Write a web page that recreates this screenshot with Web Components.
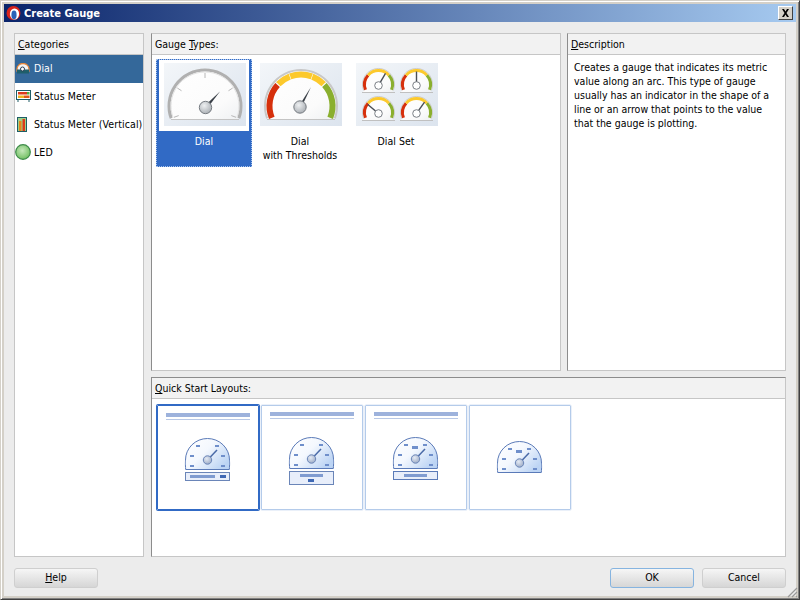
<!DOCTYPE html>
<html>
<head>
<meta charset="utf-8">
<title>Create Gauge</title>
<style>
  html, body { margin: 0; padding: 0; height: 100%; overflow: hidden; background: #ececec; }
</style>
</head>
<body>
<gauge-dialog heading="Create Gauge">
  <dialog-panel slot="categories" mnemonic="C" label="ategories">
    <category-item icon="dial" selected>Dial</category-item>
    <category-item icon="meter">Status Meter</category-item>
    <category-item icon="vmeter">Status Meter (Vertical)</category-item>
    <category-item icon="led">LED</category-item>
  </dialog-panel>

  <dialog-panel slot="types" divider before="Gauge " mnemonic="T" label="ypes:">
    <type-grid>
      <type-tile kind="dial" selected>Dial</type-tile>
      <type-tile kind="thresholds">Dial<br>with Thresholds</type-tile>
      <type-tile kind="set">Dial Set</type-tile>
    </type-grid>
  </dialog-panel>

  <dialog-panel slot="description" divider mnemonic="D" label="escription">
    <description-text>Creates a gauge that indicates its metric value along an arc. This type of gauge usually has an indicator in the shape of a line or an arrow that points to the value that the gauge is plotting.</description-text>
  </dialog-panel>

  <dialog-panel slot="layouts" divider topline mnemonic="Q" label="uick Start Layouts:">
    <layout-grid>
      <layout-tile variant="1" selected></layout-tile>
      <layout-tile variant="2"></layout-tile>
      <layout-tile variant="3"></layout-tile>
      <layout-tile variant="4"></layout-tile>
    </layout-grid>
  </dialog-panel>

  <dialog-button slot="help" mnemonic="H" label="elp"></dialog-button>
  <dialog-button slot="ok" label="OK" focused></dialog-button>
  <dialog-button slot="cancel" label="Cancel"></dialog-button>
</gauge-dialog>

<script>
const UI_FONT = '"DejaVu Sans", sans-serif';

class GaugeDialog extends HTMLElement {
  connectedCallback() {
    this.attachShadow({ mode: 'open' });
    this.shadowRoot.innerHTML = `
      <style>
        :host {
          display: flex;
          flex-direction: column;
          position: relative;
          box-sizing: border-box;
          width: 800px;
          height: 600px;
          padding: 4px;
          background: #ececec;
          border: 1px solid #d4d0c8;
          border-right-color: #404040;
          border-bottom-color: #404040;
          box-shadow: inset 1px 1px 0 #fff, inset -1px -1px 0 #808080, inset 3px 3px 0 #d4d0c8, inset -3px -3px 0 #d4d0c8;
          font: 10.5px ${UI_FONT};
          font-stretch: condensed;
          color: #000;
        }
        .title {
          flex: none;
          display: flex;
          align-items: center;
          height: 18px;
          margin: -1px -1px 0 -1px;
          padding: 0 3px 0 2px;
          background: linear-gradient(90deg, #0a246a 0%, #a6caf0 100%);
          color: #fff;
          font: bold 11px ${UI_FONT};
          font-stretch: condensed;
        }
        .title svg { margin-right: 3px; }
        .title span { flex: 1; }
        .close {
          width: 15px;
          height: 14px;
          box-sizing: border-box;
          background: #d4d0c8;
          border: 1px solid;
          border-color: #fff #404040 #404040 #fff;
          display: flex;
          align-items: center;
          justify-content: center;
        }
        .close svg { margin: 0; }
        .body {
          flex: 1;
          min-height: 0;
          display: grid;
          grid-template-columns: 130px 1fr;
          grid-template-rows: 1fr;
          gap: 7px;
          padding: 11px 9px 0 9px;
        }
        .right {
          display: grid;
          grid-template-columns: 410px 219px;
          grid-template-rows: 338px 180px;
          column-gap: 6px;
          row-gap: 6px;
        }
        .wide { grid-column: 1 / 3; display: grid; }
        .cell { display: grid; min-width: 0; min-height: 0; }
        .buttons {
          flex: none;
          display: flex;
          align-items: center;
          height: 38px;
          padding: 4px 9px 0 9px;
          box-sizing: border-box;
        }
        .spring { flex: 1; }
        .gap { width: 8px; }
        .grip { position: absolute; right: 1px; bottom: 1px; }
      </style>
      <div class="title">
        <svg width="15" height="16" viewBox="0 0 15 16">
          <circle cx="7.500" cy="8" r="7" fill="#d8241c"/>
          <ellipse cx="8.500" cy="9" rx="4.600" ry="5.600" fill="#fff"/>
          <ellipse cx="8" cy="10" rx="2.600" ry="4.400" fill="#2a62b8"/>
        </svg>
        <span>${this.getAttribute('heading')}</span>
        <div class="close">
          <svg width="9" height="8" viewBox="0 0 9 8"><path d="M1 0l2 0 1.500 2.400L6 0l2 0-2.500 4L8 8 6 8 4.500 5.600 3 8 1 8l2.500-4z" fill="#000"/></svg>
        </div>
      </div>
      <div class="body">
        <div class="cell"><slot name="categories"></slot></div>
        <div class="right">
          <div class="cell"><slot name="types"></slot></div>
          <div class="cell"><slot name="description"></slot></div>
          <div class="wide"><slot name="layouts"></slot></div>
        </div>
      </div>
      <div class="buttons">
        <slot name="help"></slot>
        <div class="spring"></div>
        <slot name="ok"></slot>
        <div class="gap"></div>
        <slot name="cancel"></slot>
      </div>
      <svg class="grip" width="12" height="12" viewBox="0 0 12 12">
        <path d="M11 2L2 11M11 6L6 11M11 10L10 11" stroke="#9a9a9a" stroke-width="1.200" fill="none"/>
      </svg>
    `;
  }
}

class DialogPanel extends HTMLElement {
  connectedCallback() {
    this.attachShadow({ mode: 'open' });
    const before = this.getAttribute('before') || '';
    this.shadowRoot.innerHTML = `
      <style>
        :host {
          display: flex;
          flex-direction: column;
          box-sizing: border-box;
          min-width: 0;
          min-height: 0;
          background: #fff;
          border: 1px solid #c6c6c6;
        }
        :host([divider]) { border-left-color: #8c8c8c; }
        :host([topline]) { border-top-color: #8c8c8c; }
        .head {
          flex: none;
          height: 20px;
          line-height: 20px;
          padding-left: 3px;
          background: #f2f2f2;
          border-bottom: 1px solid #c6c6c6;
          white-space: nowrap;
        }
        .content { flex: 1; min-height: 0; }
      </style>
      <div class="head">${before}<u>${this.getAttribute('mnemonic')}</u>${this.getAttribute('label')}</div>
      <div class="content"><slot></slot></div>
    `;
  }
}

const CATEGORY_ICONS = {
  dial: `<svg width="14" height="11" viewBox="0 0 14 11" style="margin-left:1px">
      <path d="M1 8V6a6 5.500 0 0 1 12 0v2z" fill="#f4f4f4" stroke="#e8873a" stroke-width="1.300"/>
      <rect x="1" y="6.500" width="12" height="4" fill="#1f5f6b"/>
      <circle cx="6.500" cy="6" r="2" fill="#fff" stroke="#2a3f55"/>
    </svg>`,
  meter: `<svg width="15" height="12" viewBox="0 0 15 12" style="margin-left:1px">
      <rect x=".5" y=".5" width="14" height="9" fill="#fff" stroke="#1e5d66"/>
      <rect x="2" y="2" width="9" height="2.500" fill="#dd3a1a"/>
      <rect x="11" y="2" width="2.500" height="2.500" fill="#4fae3e"/>
      <rect x="2" y="5.500" width="6" height="2.500" fill="#f0b420"/>
      <rect x="8" y="5.500" width="5.500" height="2.500" fill="#dd5a1a"/>
      <path d="M2 10v2M13 10v2" stroke="#1e5d66"/>
    </svg>`,
  vmeter: `<svg width="10" height="15" viewBox="0 0 10 15" style="margin-left:2px">
      <rect x=".5" y=".5" width="9" height="14" fill="#9fd08a" stroke="#1e5d66"/>
      <rect x="2" y="4" width="2.500" height="10" fill="#e8861a"/>
      <rect x="5.500" y="2" width="2.500" height="12" fill="#dd3a1a"/>
    </svg>`,
  led: `<svg width="16" height="16" viewBox="0 0 16 16">
      <defs><radialGradient id="led" cx="45%" cy="40%" r="60%">
        <stop offset="0" stop-color="#c6e8bc"/><stop offset="1" stop-color="#72c062"/>
      </radialGradient></defs>
      <circle cx="8" cy="8" r="7.300" fill="url(#led)" stroke="#3d8a4a" stroke-width="1.200"/>
    </svg>`
};

class CategoryItem extends HTMLElement {
  connectedCallback() {
    this.attachShadow({ mode: 'open' });
    const icon = this.getAttribute('icon');
    this.shadowRoot.innerHTML = `
      <style>
        :host {
          display: flex;
          align-items: center;
          box-sizing: border-box;
          height: 28px;
          padding-bottom: 2px;
          white-space: nowrap;
          letter-spacing: 0.1px;
        }
        :host([selected]) { background: #34689a; color: #fff; }
        .icon {
          flex: none;
          width: 19px;
          display: flex;
        }
      </style>
      <div class="icon">${CATEGORY_ICONS[icon]}</div>
      <slot></slot>
    `;
  }
}

// helpers for the big dial pictures
function polar(cx, cy, r, deg) {
  const a = deg * Math.PI / 180;
  return [(cx + r * Math.sin(a)).toFixed(2), (cy - r * Math.cos(a)).toFixed(2)];
}
function arc(cx, cy, r, from, to) {
  const p = polar(cx, cy, r, from), q = polar(cx, cy, r, to);
  const large = to - from > 180 ? 1 : 0;
  return `M${p[0]} ${p[1]}A${r} ${r} 0 ${large} 1 ${q[0]} ${q[1]}`;
}
function needle(x1, y1, x2, y2, w) {
  // tapered pointer, thick at the hub
  const dx = x2 - x1, dy = y2 - y1, len = Math.hypot(dx, dy);
  const nx = -dy / len * w, ny = dx / len * w;
  return `<path d="M${x1 + nx} ${y1 + ny}L${x2} ${y2}L${x1 - nx} ${y1 - ny}z" fill="#3a4048"/>`;
}
function bigDial(colored) {
  const cx = 41, cy = 43, r = 36;
  let bands = '';
  if (colored) {
    bands = `
      <path d="${arc(cx, cy, 31.500, -112, -48)}" stroke="#d6300c" stroke-width="6" fill="none"/>
      <path d="${arc(cx, cy, 31.500, -46, -21)}" stroke="#fcc92c" stroke-width="6" fill="none"/>
      <path d="${arc(cx, cy, 31.500, -20, 20)}" stroke="#fcc92c" stroke-width="6" fill="none"/>
      <path d="${arc(cx, cy, 31.500, 21, 46)}" stroke="#fcc92c" stroke-width="6" fill="none"/>
      <path d="${arc(cx, cy, 31.500, 48, 112)}" stroke="#8aaf2e" stroke-width="6" fill="none"/>`;
  } else {
    bands = [-110, -57, 0, 57, 110].map(d => {
      const a = polar(cx, cy, 33, d), b = polar(cx, cy, 28, d);
      return `<path d="M${a[0]} ${a[1]}L${b[0]} ${b[1]}" stroke="#b8b8b8" stroke-width="1"/>`;
    }).join('');
  }
  const hubX = colored ? 40 : 41.5, hubY = colored ? 44 : 44.5;
  const pointer = colored
    ? needle(hubX, hubY, 51, 24, 1.400)
    : needle(hubX, hubY, 56, 28.500, 1.800);
  return `
    <path d="${arc(cx, cy, r, -110, 110)}L74 57H8z" fill="url(#face)"/>
    <path d="${arc(cx, cy, r, -110, 110)}" stroke="${colored ? '#c8c8c8' : '#b0b0b0'}" stroke-width="${colored ? 2 : 3}" fill="none"/>
    <path d="${arc(cx, cy, r - 2, -110, 110)}" stroke="#e2e2e2" stroke-width="1" fill="none"/>
    <path d="M7 56.500H75" stroke="#c4c4c4"/>
    ${bands}${pointer}
    <circle cx="${hubX}" cy="${hubY}" r="6.200" fill="url(#hub)" stroke="#777c82"/>`;
}
function miniDial(x, y, ang) {
  const cx = x + 17.500, cy = y + 16.500, r = 15.500;
  const hy = cy + 1;
  const t = polar(cx, hy, 14, ang);
  const s = polar(cx, hy, 3.500, ang);
  return `
    <path d="${arc(cx, cy, r, -112, 112)}V${y + 24}H${x + 2}z" fill="url(#face)"/>
    <path d="${arc(cx, cy, r + 0.500, -112, 112)}" stroke="#cccccc" stroke-width="1" fill="none"/>
    <path d="${arc(cx, cy, r - 1.500, -112, -48)}" stroke="#d6300c" stroke-width="3" fill="none"/>
    <path d="${arc(cx, cy, r - 1.500, -48, 48)}" stroke="#fcc92c" stroke-width="3" fill="none"/>
    <path d="${arc(cx, cy, r - 1.500, 48, 112)}" stroke="#8aaf2e" stroke-width="3" fill="none"/>
    <path d="M${x + 1} ${y + 24}.5H${x + 34}" stroke="#c0c0c0"/>
    <path d="M${s[0]} ${s[1]}L${t[0]} ${t[1]}" stroke="#4a4f55" stroke-width="1.400"/>
    <circle cx="${cx}" cy="${hy}" r="3.800" fill="#fff" stroke="#7a7f85"/>`;
}

class GaugeArt extends HTMLElement {
  connectedCallback() {
    this.attachShadow({ mode: 'open' });
    const kind = this.getAttribute('kind');
    let art = '';
    if (kind === 'dial') art = bigDial(false);
    if (kind === 'thresholds') art = bigDial(true);
    if (kind === 'set') {
      art = miniDial(5, 5, 30) + miniDial(43, 5, 0) + miniDial(5, 33, -50) + miniDial(43, 33, 35);
    }
    this.shadowRoot.innerHTML = `
      <style>
        :host { display: block; width: 82px; height: 63px; }
        svg { display: block; }
      </style>
      <svg width="82" height="63" viewBox="0 0 82 63">
        <defs>
          <linearGradient id="bg" x1="0" y1="0" x2="1" y2="1">
            <stop offset="0" stop-color="#f3f6f9"/><stop offset="1" stop-color="#dce4ee"/>
          </linearGradient>
          <linearGradient id="face" x1="0" y1="0" x2="1" y2="1">
            <stop offset="0" stop-color="#ffffff"/><stop offset="0.700" stop-color="#fbfbfb"/><stop offset="1" stop-color="#eef0f2"/>
          </linearGradient>
          <radialGradient id="hub" cx="40%" cy="35%" r="70%">
            <stop offset="0" stop-color="#eef0f2"/><stop offset="1" stop-color="#a8adb2"/>
          </radialGradient>
        </defs>
        <rect width="82" height="63" fill="url(#bg)"/>
        ${art}
      </svg>
    `;
  }
}

class TypeGrid extends HTMLElement {
  connectedCallback() {
    this.attachShadow({ mode: 'open' });
    this.shadowRoot.innerHTML = `
      <style>
        :host { display: flex; padding: 4px 0 0 4px; align-items: flex-start; }
      </style>
      <slot></slot>
    `;
  }
}

class TypeTile extends HTMLElement {
  connectedCallback() {
    this.attachShadow({ mode: 'open' });
    this.shadowRoot.innerHTML = `
      <style>
        :host {
          display: flex;
          flex-direction: column;
          align-items: center;
          box-sizing: border-box;
          width: 96px;
          height: 108px;
          text-align: center;
          line-height: 14px;
        }
        :host([selected]) {
          background: #316ac5;
          color: #fff;
          outline: 1px dotted #a9c4ec;
          outline-offset: -1px;
        }
        .pic {
          box-sizing: border-box;
          width: 90px;
          height: 71px;
          margin-top: 1px;
          padding: 3px 3px 3px 5px;
        }
        :host([selected]) .pic { background: #fff; }
        .text { margin-top: 3px; }
      </style>
      <div class="pic"><gauge-art kind="${this.getAttribute('kind')}"></gauge-art></div>
      <div class="text"><slot></slot></div>
    `;
  }
}

class DescriptionText extends HTMLElement {
  connectedCallback() {
    this.attachShadow({ mode: 'open' });
    this.shadowRoot.innerHTML = `
      <style>
        :host { display: block; padding: 5px 6px 0 6px; line-height: 14px; }
      </style>
      <slot></slot>
    `;
  }
}

function layoutDial(y, center) {
  const ticks = [[11, 7], [30, 7], [5, 17], [36, 17], [5, 27], [36, 27]]
    .map(t => `<rect x="${t[0]}" y="${y + t[1]}" width="4" height="2" fill="#6f8fcb"/>`).join('');
  return `
    <g transform="translate(28 0)">
      <path d="M.7 ${y + 31.500}C.2 ${y + 26} .5 ${y + 24} .5 ${y + 22}A22 21.500 0 0 1 44.500 ${y + 22}C44.500 ${y + 24} 44.800 ${y + 26} 44.300 ${y + 31.500}z"
        fill="url(#dialFace)" stroke="#5a7ab8"/>
      ${ticks}
      ${center ? `<rect x="19" y="${y + 9}" width="6" height="3" fill="#6f8fcb"/>` : ''}
      <path d="M22.500 ${y + 22}L32 ${y + 12}" stroke="#4a6aa8" stroke-width="1.500"/>
      <circle cx="22.500" cy="${y + 22}" r="4.200" fill="url(#dialHub)" stroke="#6a85b8"/>
    </g>`;
}
function layoutHeader(y) {
  return `
    <rect x="9" y="${y}" width="84" height="4" fill="#9db2dc"/>
    <rect x="9" y="${y + 6}" width="84" height="1" fill="#b8c8e6"/>`;
}
const LAYOUT_ART = {
  1: layoutHeader(8) + layoutDial(33, false) + `
    <rect x="28.500" y="67.500" width="44" height="8" fill="#e8eefa" stroke="#6a85b8"/>
    <rect x="33" y="70" width="25" height="3" fill="#7f9bd0"/>
    <rect x="63" y="70" width="6" height="3" fill="#3f68b4"/>`,
  2: layoutHeader(7) + layoutDial(32, false) + `
    <rect x="28.500" y="66.500" width="44" height="13" fill="#e8eefa" stroke="#6a85b8"/>
    <rect x="39" y="69" width="23" height="3" fill="#7f9bd0"/>
    <rect x="47" y="74" width="6" height="3" fill="#3f68b4"/>`,
  3: layoutHeader(7) + layoutDial(32, true) + `
    <rect x="28.500" y="66.500" width="44" height="8" fill="#e8eefa" stroke="#5a7ab8"/>
    <rect x="39" y="69" width="23" height="3" fill="#7f9bd0"/>`,
  4: layoutDial(36, true)
};

class LayoutTile extends HTMLElement {
  connectedCallback() {
    this.attachShadow({ mode: 'open' });
    this.shadowRoot.innerHTML = `
      <style>
        :host {
          display: block;
          box-sizing: border-box;
          width: 102px;
          height: 105px;
          border: 1px solid #b4cbea;
          border-radius: 1px;
          box-shadow: 0 0 0 0.500px #d6e2f3;
        }
        :host([selected]) {
          border-color: #316ac5;
          box-shadow: 0 0 0 1px #316ac5;
        }
        svg { display: block; margin: -1px; }
      </style>
      <svg width="102" height="105" viewBox="0 0 102 105">
        <defs>
          <linearGradient id="dialFace" x1="0" y1="0" x2="1" y2="0.700">
            <stop offset="0" stop-color="#ffffff"/><stop offset="0.500" stop-color="#f4f8fe"/><stop offset="1" stop-color="#bcd4f4"/>
          </linearGradient>
          <radialGradient id="dialHub" cx="40%" cy="35%" r="70%">
            <stop offset="0" stop-color="#e4eaf4"/><stop offset="1" stop-color="#9aa9c4"/>
          </radialGradient>
        </defs>
        ${LAYOUT_ART[this.getAttribute('variant')]}
      </svg>
    `;
  }
}

class LayoutGrid extends HTMLElement {
  connectedCallback() {
    this.attachShadow({ mode: 'open' });
    this.shadowRoot.innerHTML = `
      <style>
        :host { display: flex; gap: 2px; padding: 6px 0 0 5px; }
      </style>
      <slot></slot>
    `;
  }
}

class DialogButton extends HTMLElement {
  connectedCallback() {
    this.attachShadow({ mode: 'open' });
    const m = this.getAttribute('mnemonic');
    this.shadowRoot.innerHTML = `
      <style>
        :host {
          display: flex;
          align-items: center;
          justify-content: center;
          box-sizing: border-box;
          width: 84px;
          height: 20px;
          padding-bottom: 2px;
          border: 1px solid #cfcfcf;
          border-radius: 3px;
          background: linear-gradient(#f6f6f6 0%, #ececec 30%, #d6d6d6 100%);
        }
        :host([focused]) { border-color: #86b4e0; }
      </style>
      <span>${m ? `<u>${m}</u>` : ''}${this.getAttribute('label')}</span>
    `;
  }
}

customElements.define('gauge-dialog', GaugeDialog);
customElements.define('dialog-panel', DialogPanel);
customElements.define('category-item', CategoryItem);
customElements.define('gauge-art', GaugeArt);
customElements.define('type-grid', TypeGrid);
customElements.define('type-tile', TypeTile);
customElements.define('description-text', DescriptionText);
customElements.define('layout-tile', LayoutTile);
customElements.define('layout-grid', LayoutGrid);
customElements.define('dialog-button', DialogButton);
</script>
</body>
</html>
